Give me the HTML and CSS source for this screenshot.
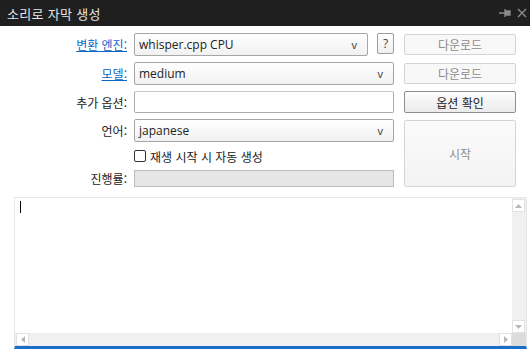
FILE: index.html
```html
<!DOCTYPE html>
<html lang="ko">
<head>
    <meta charset="UTF-8">
    <title>소리로 자막 생성</title>
    <link rel="stylesheet" href="styles.css">
</head>
<body>
    <div class="titlebar">
        <span class="title">소리로 자막 생성</span>
        <div class="title-icons">
            <svg width="12" height="10" viewBox="0 0 12 10"><path d="M0 5h6M6 1v8M7 3h4v4H7z" stroke="#8a8a8a" stroke-width="1.4" fill="#8a8a8a"/></svg>
            <svg width="10" height="10" viewBox="0 0 10 10"><path d="M1 1l8 8M9 1l-8 8" stroke="#8a8a8a" stroke-width="1.4"/></svg>
        </div>
    </div>

    <div class="form">
        <!-- row 1 -->
        <a class="label link" href="#">변환 엔진:</a>
        <div class="field-with-help">
            <div class="combo"><span>whisper.cpp CPU</span><span class="arrow">v</span></div>
            <button class="help-btn">?</button>
        </div>
        <button class="btn btn-disabled btn-small">다운로드</button>

        <!-- row 2 -->
        <a class="label link" href="#">모델:</a>
        <div class="combo"><span>medium</span><span class="arrow">v</span></div>
        <button class="btn btn-disabled btn-small">다운로드</button>

        <!-- row 3 -->
        <label class="label">추가 옵션:</label>
        <input class="text-input" type="text">
        <button class="btn btn-normal">옵션 확인</button>

        <!-- row 4 -->
        <label class="label">언어:</label>
        <div class="combo"><span>japanese</span><span class="arrow">v</span></div>
        <button class="btn btn-disabled btn-start">시작</button>

        <!-- row 5 -->
        <div class="check-row">
            <span class="checkbox"></span>
            <span>재생 시작 시 자동 생성</span>
        </div>

        <!-- row 6 -->
        <label class="label">진행률:</label>
        <div class="progress"></div>
    </div>

    <div class="output">
        <div class="output-body">
            <div class="text-area"><span class="caret"></span></div>
            <div class="vscroll">
                <div class="sb-btn"><svg width="7" height="4" viewBox="0 0 7 4"><path d="M3.5 0L7 4H0z" fill="#b8b8b8"/></svg></div>
                <div class="sb-track"></div>
                <div class="sb-btn"><svg width="7" height="4" viewBox="0 0 7 4"><path d="M0 0h7L3.5 4z" fill="#b8b8b8"/></svg></div>
            </div>
        </div>
        <div class="hscroll">
            <div class="sb-btn"><svg width="4" height="7" viewBox="0 0 4 7"><path d="M4 0v7L0 3.5z" fill="#b8b8b8"/></svg></div>
            <div class="sb-track"></div>
            <div class="sb-btn"><svg width="4" height="7" viewBox="0 0 4 7"><path d="M0 0l4 3.5L0 7z" fill="#b8b8b8"/></svg></div>
            <div class="sb-corner"></div>
        </div>
    </div>
</body>
</html>
```

FILE: styles.css
```css
* {
    margin: 0;
    padding: 0;
    box-sizing: border-box;
}

body {
    background: white;
    font-family: "Noto Sans CJK KR", "Noto Sans", sans-serif;
    font-size: 12px;
    color: #222;
    width: 530px;
    height: 350px;
    overflow: hidden;
}

.titlebar {
    height: 26px;
    background: #1f1f1f;
    display: flex;
    align-items: center;
    justify-content: space-between;
    padding: 0 3px 0 7px;
}

.title {
    color: #e4e4e4;
    font-size: 13px;
    letter-spacing: 0.3px;
}

.title-icons {
    display: flex;
    gap: 6px;
    align-items: center;
}

.form {
    display: grid;
    grid-template-columns: 127px 260px 115px;
    grid-template-rows: 23px 23px 22px 23px 16px 17px;
    column-gap: 7px;
    row-gap: 6px;
    padding-top: 7px;
    align-items: center;
}

.form > .btn {
    grid-column: 3;
    margin-left: 3px;
}

.label {
    grid-column: 1;
    justify-self: end;
    font-size: 12px;
    color: #222;
}

.link {
    color: #0b66c8;
    text-decoration: underline;
}

.field-with-help {
    display: flex;
    gap: 9px;
    height: 100%;
}

.field-with-help .combo {
    flex: 1;
}

.combo {
    height: 23px;
    border: 1px solid #a6a6a6;
    border-radius: 2px;
    background: linear-gradient(#ffffff, #f1f1f1);
    display: flex;
    align-items: center;
    justify-content: space-between;
    padding: 0 10px 0 4px;
    font-family: "Open Sans", "Noto Sans", sans-serif;
    font-size: 12px;
    color: #222;
}

.arrow {
    font-size: 11px;
    color: #333;
}

.help-btn {
    width: 17px;
    height: 21px;
    border: 1px solid #9c9c9c;
    border-radius: 2px;
    background: linear-gradient(#ffffff, #f0f0f0);
    font-family: "Open Sans", sans-serif;
    font-size: 12px;
    color: #444;
}

.text-input {
    height: 22px;
    border: 1px solid #ababab;
    border-top-color: #c8c8c8;
    border-radius: 2px;
    background: white;
}

.btn {
    height: 21px;
    border-radius: 2px;
    font-family: "Noto Sans CJK KR", sans-serif;
    font-size: 12px;
}

.btn-disabled {
    border: 1px solid #d4d4d4;
    background: #f8f8f8;
    color: #8c8c8c;
}

.btn-normal {
    height: 22px;
    border: 1px solid #8e8e8e;
    background: linear-gradient(#fdfdfd, #ebebeb);
    color: #222;
}

.btn-start {
    grid-row: 4 / 7;
    align-self: stretch;
    height: auto;
    margin-top: 1px;
    background: linear-gradient(#fbfbfb, #f3f3f3);
}

.check-row {
    grid-column: 2;
    display: flex;
    align-items: center;
    gap: 4px;
    font-size: 12px;
    color: #222;
}

.progress {
    grid-column: 2;
    height: 17px;
    border: 1px solid #bcbcbc;
    background: #e6e6e6;
}

.checkbox {
    width: 12px;
    height: 12px;
    border: 1px solid #333;
    border-radius: 2px;
    background: white;
}

.output {
    margin: 10px 3px 0 14px;
    height: 152px;
    border: 1px solid #e6e6e6;
    border-bottom: 3px solid #1a6ec8;
    display: flex;
    flex-direction: column;
}

.output-body {
    flex: 1;
    display: flex;
}

.text-area {
    flex: 1;
    padding: 3px 0 0 5px;
}

.caret {
    display: block;
    width: 1px;
    height: 12px;
    background: #000;
}

.vscroll {
    width: 14px;
    background: #f0f0f0;
    display: flex;
    flex-direction: column;
    padding: 1px 0 0 0;
}

.sb-btn {
    width: 13px;
    height: 13px;
    background: white;
    border: 1px solid #e2e2e2;
    display: flex;
    align-items: center;
    justify-content: center;
}

.sb-track {
    flex: 1;
}

.hscroll {
    height: 13px;
    background: #f0f0f0;
    display: flex;
    padding-left: 1px;
}

.sb-corner {
    width: 14px;
    background: #dcdcdc;
}
```
